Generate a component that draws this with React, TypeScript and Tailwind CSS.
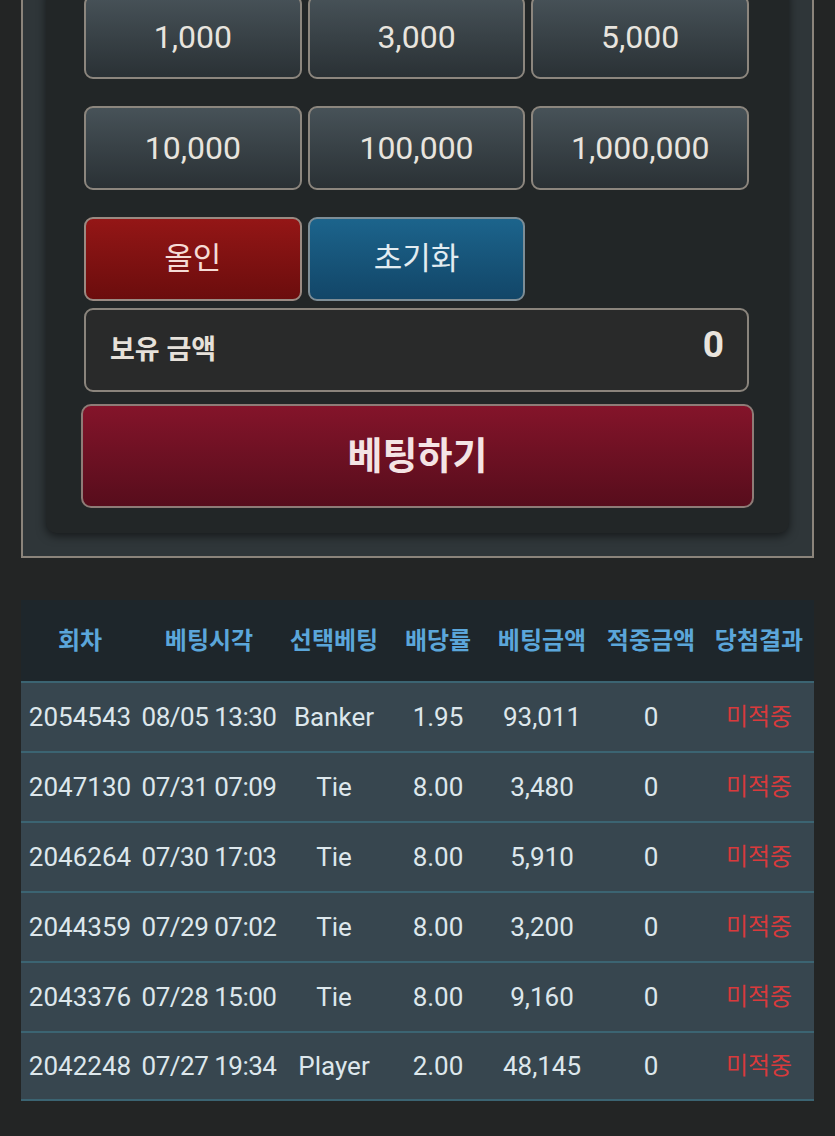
const amounts = ["1,000", "3,000", "5,000", "10,000", "100,000", "1,000,000"];

const rows = [
  { round: "2054543", time: "08/05 13:30", pick: "Banker", odds: "1.95", bet: "93,011", win: "0", result: "미적중" },
  { round: "2047130", time: "07/31 07:09", pick: "Tie", odds: "8.00", bet: "3,480", win: "0", result: "미적중" },
  { round: "2046264", time: "07/30 17:03", pick: "Tie", odds: "8.00", bet: "5,910", win: "0", result: "미적중" },
  { round: "2044359", time: "07/29 07:02", pick: "Tie", odds: "8.00", bet: "3,200", win: "0", result: "미적중" },
  { round: "2043376", time: "07/28 15:00", pick: "Tie", odds: "8.00", bet: "9,160", win: "0", result: "미적중" },
  { round: "2042248", time: "07/27 19:34", pick: "Player", odds: "2.00", bet: "48,145", win: "0", result: "미적중" },
];

const headers = ["회차", "베팅시각", "선택베팅", "배당률", "베팅금액", "적중금액", "당첨결과"];

const gridCols = "grid grid-cols-[118px_140px_110px_98px_110px_108px_108px]";

export default function App() {
  return (
    <div className="min-h-[1136px] overflow-hidden bg-[#232525] font-['Roboto','Noto_Sans_CJK_KR',sans-serif]">
      {/* Betting panel */}
      <div className="mx-[21px] -mt-[40px] border-2 border-[#8b847b] bg-[#2f3639] px-[23px] pb-[23px] pt-[23px]">
        <div className="rounded-[10px] bg-[#222627] pb-[25px] pl-[38px] pr-[40px] pt-[10px] shadow-[0_3px_10px_rgba(0,0,0,0.55)]">
          {/* Amount buttons */}
          <div className="grid grid-cols-3 gap-x-[6px] gap-y-[27px]">
            {amounts.map((a) => (
              <button
                key={a}
                className="flex h-[84px] items-center justify-center rounded-[9px] border-2 border-[#8c867e] bg-gradient-to-b from-[#475258] to-[#2a3135] text-[32px] text-[#e8e4de]"
              >
                {a}
              </button>
            ))}
            <button className="flex h-[84px] items-center justify-center rounded-[9px] border-2 border-[#9a8a82] bg-gradient-to-b from-[#941616] to-[#6b0d0d] text-[31px] text-[#f5dcd6]">
              올인
            </button>
            <button className="flex h-[84px] items-center justify-center rounded-[9px] border-2 border-[#7d8d96] bg-gradient-to-b from-[#1c648c] to-[#124668] text-[31px] text-[#e2ecf1]">
              초기화
            </button>
          </div>

          {/* Balance */}
          <div className="mt-[7px] flex h-[84px] items-center justify-between rounded-[9px] border-2 border-[#8a847c] bg-[#292a2a] pl-[24px] pr-[23px]">
            <span className="text-[27px] font-bold text-[#e6e1da]">보유 금액</span>
            <span className="-mt-[10px] text-[37px] font-bold text-[#e9e4dd]">0</span>
          </div>

          {/* Submit */}
          <button className="-ml-[3px] -mr-[5px] mt-[12px] flex h-[104px] w-[calc(100%+8px)] items-center justify-center rounded-[10px] border-2 border-[#8e7c77] bg-gradient-to-b from-[#84142a] to-[#570d1c] text-[38px] font-bold text-[#f4e4e4]">
            베팅하기
          </button>
        </div>
      </div>

      {/* History table */}
      <div className="mx-[21px] mt-[42px]">
        <div className={`${gridCols} h-[81px] items-center bg-[#1e262b] text-center text-[24px] font-bold text-[#5ba6da]`}>
          {headers.map((h) => (
            <div key={h} className="whitespace-nowrap">{h}</div>
          ))}
        </div>
        {rows.map((r, i) => (
          <div
            key={r.round}
            className={`${gridCols} h-[70px] items-center whitespace-nowrap border-t-2 border-[#3b6472] bg-[#37464f] text-center text-[26px] text-[#dde7ec] ${
              i === rows.length - 1 ? "border-b-2" : ""
            }`}
          >
            <div>{r.round}</div>
            <div className="tracking-[-0.5px]">{r.time}</div>
            <div>{r.pick}</div>
            <div>{r.odds}</div>
            <div>{r.bet}</div>
            <div>{r.win}</div>
            <div className="text-[24px] text-[#d83a3c]">{r.result}</div>
          </div>
        ))}
      </div>
    </div>
  );
}
